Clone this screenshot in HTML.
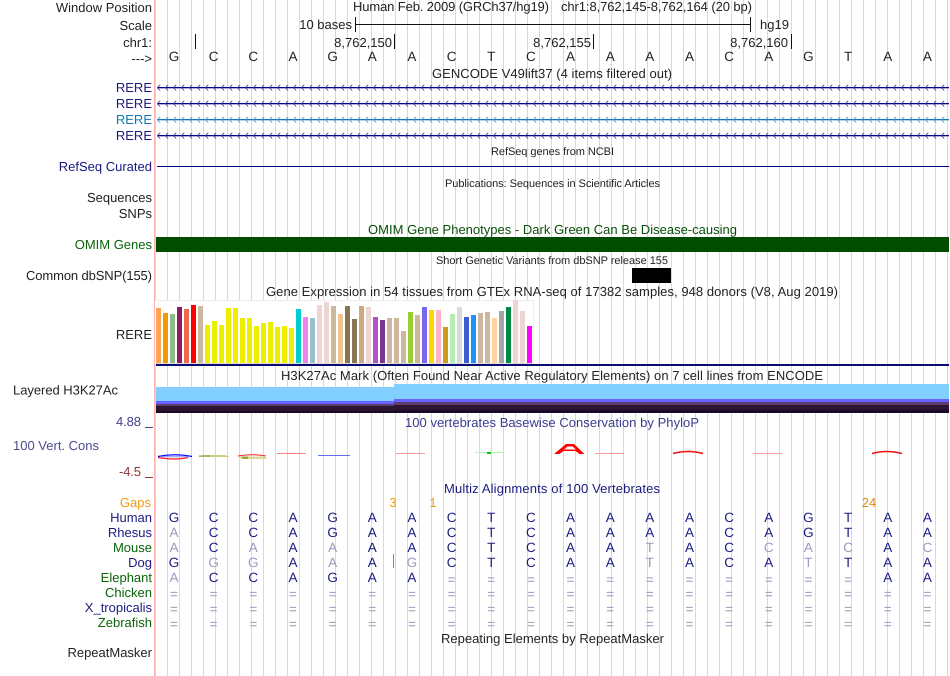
<!DOCTYPE html>
<html><head><meta charset="utf-8"><title>UCSC Genome Browser</title>
<style>
html,body{margin:0;padding:0;background:#fff;width:950px;height:676px;overflow:hidden}
#g{position:absolute;left:155px;top:0;width:795px;height:676px;background:repeating-linear-gradient(to right,#d8d4f6 0 1px,transparent 1px 12px)}
#p{position:absolute;left:154px;top:0;width:1px;height:676px;background:#ffb0b0}
svg{position:absolute;left:0;top:0}
text{font-family:"Liberation Sans",sans-serif;font-size:13px;fill:#222;text-rendering:geometricPrecision}
.e{text-anchor:end}.m{text-anchor:middle}
.n{fill:#1a1a80}.gr{fill:#0a640a}
.b{text-anchor:middle;fill:#1a1a80;font-size:13.5px}
.b tspan{fill:#9a9ac0}
.s{font-size:11px}
</style></head><body>
<div id="g"></div><div id="p"></div>
<svg width="950" height="676" viewBox="0 0 950 676">
<defs>
<pattern id="c1" x="157" y="80" width="8" height="16" patternUnits="userSpaceOnUse"><path d="M3.2 4.8L0.3 7.7L3.2 10.6" fill="none" stroke="#3a3a9a" stroke-width="0.8"/></pattern>
<pattern id="c2" x="157" y="112" width="8" height="16" patternUnits="userSpaceOnUse"><path d="M3.2 4.8L0.3 7.7L3.2 10.6" fill="none" stroke="#4a9ac8" stroke-width="0.8"/></pattern>
</defs>
<!-- left labels -->
<text class="e" x="152" y="12">Window Position</text>
<text class="e" x="152" y="30">Scale</text>
<text class="e" x="152" y="47">chr1:</text>
<text class="e" x="152" y="63">---&gt;</text>
<text class="e n" x="152" y="92">RERE</text>
<text class="e n" x="152" y="108">RERE</text>
<text class="e" style="fill:#0f78b4" x="152" y="124">RERE</text>
<text class="e n" x="152" y="140">RERE</text>
<text class="e n" x="152" y="171">RefSeq Curated</text>
<text class="e" x="152" y="202">Sequences</text>
<text class="e" x="152" y="218">SNPs</text>
<text class="e gr" x="152" y="249">OMIM Genes</text>
<text class="e" x="152" y="280" textLength="126">Common dbSNP(155)</text>
<text class="e" x="152" y="339">RERE</text>
<text x="13" y="394.5" textLength="105">Layered H3K27Ac</text>
<text x="13" y="450" style="fill:#4c4c96" textLength="86">100 Vert. Cons</text>
<text x="116" y="426" style="fill:#44448f" textLength="25">4.88</text>
<rect x="145" y="427" width="8" height="1" fill="#44448f"/>
<text x="119" y="476" style="fill:#8b3a3a" textLength="22">-4.5</text>
<rect x="145" y="477" width="8" height="1" fill="#8b3a3a"/>
<text class="e" style="fill:#f39c12" x="151" y="507">Gaps</text>
<text class="e n" x="152" y="522">Human</text>
<text class="e n" x="152" y="537">Rhesus</text>
<text class="e gr" x="152" y="552">Mouse</text>
<text class="e n" x="152" y="567">Dog</text>
<text class="e gr" x="152" y="582">Elephant</text>
<text class="e gr" x="152" y="597">Chicken</text>
<text class="e n" x="152" y="612">X_tropicalis</text>
<text class="e gr" x="152" y="627">Zebrafish</text>
<text class="e" x="152" y="657">RepeatMasker</text>
<!-- ruler -->
<text x="353" y="11" textLength="196">Human Feb. 2009 (GRCh37/hg19)</text>
<text x="561" y="11" textLength="191">chr1:8,762,145-8,762,164 (20 bp)</text>
<text class="e" x="352" y="29">10 bases</text>
<rect x="355" y="17" width="1" height="15" fill="#111"/>
<rect x="355" y="24" width="396" height="1" fill="#111"/>
<rect x="750" y="17" width="1" height="15" fill="#111"/>
<text x="760" y="29">hg19</text>
<rect x="195" y="34" width="1" height="15" fill="#111"/>
<rect x="394" y="34" width="1" height="15" fill="#111"/>
<rect x="593" y="34" width="1" height="15" fill="#111"/>
<rect x="791" y="34" width="1" height="15" fill="#111"/>
<text class="e" x="392" y="47">8,762,150</text>
<text class="e" x="591" y="47">8,762,155</text>
<text class="e" x="788" y="47">8,762,160</text>
<text class="b" style="fill:#222" y="61" x="174 213.6 253.3 293 332.6 372.3 411.9 451.6 491.2 530.9 570.5 610.2 649.8 689.5 729.1 768.8 808.4 848.1 887.7 927.4">GCCAGAACTCAAAACAGTAA</text>
<!-- gencode -->
<text x="432" y="78" textLength="240">GENCODE V49lift37 (4 items filtered out)</text>
<rect x="157" y="87" width="792" height="1.3" fill="#000080"/>
<rect x="157" y="103" width="792" height="1.3" fill="#000080"/>
<rect x="157" y="119" width="792" height="1.3" fill="#0f78b4"/>
<rect x="157" y="135" width="792" height="1.3" fill="#000080"/>
<rect x="157" y="80" width="792" height="16" fill="url(#c1)"/>
<rect x="157" y="96" width="792" height="16" fill="url(#c1)"/>
<rect x="157" y="112" width="792" height="16" fill="url(#c2)"/>
<rect x="157" y="128" width="792" height="16" fill="url(#c1)"/>
<text class="s" x="491" y="155" textLength="123">RefSeq genes from NCBI</text>
<rect x="157" y="166" width="792" height="1" fill="#000080"/>
<text class="s" x="445" y="187" textLength="215">Publications: Sequences in Scientific Articles</text>
<text x="368" y="234" textLength="369" style="fill:#0a500a">OMIM Gene Phenotypes - Dark Green Can Be Disease-causing</text>
<rect x="156" y="237" width="793" height="15" fill="#004d00"/>
<text class="s" x="436" y="264" textLength="232">Short Genetic Variants from dbSNP release 155</text>
<rect x="632" y="268" width="39" height="15" fill="#000"/>
<text x="266" y="296" textLength="572">Gene Expression in 54 tissues from GTEx RNA-seq of 17382 samples, 948 donors (V8, Aug 2019)</text>
<!-- chart -->
<rect x="155" y="300" width="379" height="64" fill="#fff"/>
<rect x="156" y="300" width="377" height="1" fill="#eee"/>
<rect x="533" y="300" width="1" height="64" fill="#eee"/>
<rect x="156" y="363" width="378" height="1" fill="#ddd"/>
<g>
<rect x="156" y="308" width="5" height="55" fill="#ffa54f"/>
<rect x="163" y="313" width="5" height="50" fill="#ee9a00"/>
<rect x="170" y="314" width="5" height="49" fill="#8fbc8f"/>
<rect x="177" y="307" width="5" height="56" fill="#8b1c62"/>
<rect x="184" y="309" width="5" height="54" fill="#ee6a50"/>
<rect x="191" y="305" width="5" height="58" fill="#ff0000"/>
<rect x="198" y="306" width="5" height="57" fill="#cdb79e"/>
<rect x="205" y="325" width="5" height="38" fill="#eeee00"/>
<rect x="212" y="321" width="5" height="42" fill="#eeee00"/>
<rect x="219" y="325" width="5" height="38" fill="#eeee00"/>
<rect x="226" y="308" width="5" height="55" fill="#eeee00"/>
<rect x="233" y="308" width="5" height="55" fill="#eeee00"/>
<rect x="240" y="318" width="5" height="45" fill="#eeee00"/>
<rect x="247" y="318" width="5" height="45" fill="#eeee00"/>
<rect x="254" y="326" width="5" height="37" fill="#eeee00"/>
<rect x="261" y="323" width="5" height="40" fill="#eeee00"/>
<rect x="268" y="322" width="5" height="41" fill="#eeee00"/>
<rect x="275" y="327" width="5" height="36" fill="#eeee00"/>
<rect x="282" y="326" width="5" height="37" fill="#eeee00"/>
<rect x="289" y="328" width="5" height="35" fill="#eeee00"/>
<rect x="296" y="309" width="5" height="54" fill="#00cdcd"/>
<rect x="303" y="317" width="5" height="46" fill="#ee82ee"/>
<rect x="310" y="318" width="5" height="45" fill="#9ac0cd"/>
<rect x="317" y="305" width="5" height="58" fill="#eed5d2"/>
<rect x="324" y="302" width="5" height="61" fill="#eed5d2"/>
<rect x="331" y="306" width="5" height="57" fill="#cdb79e"/>
<rect x="338" y="314" width="5" height="49" fill="#eec591"/>
<rect x="345" y="306" width="5" height="57" fill="#8b7355"/>
<rect x="352" y="319" width="5" height="44" fill="#8b7355"/>
<rect x="359" y="306" width="5" height="57" fill="#cdaa7d"/>
<rect x="366" y="307" width="5" height="56" fill="#eed5d2"/>
<rect x="373" y="317" width="5" height="46" fill="#b452cd"/>
<rect x="380" y="320" width="5" height="43" fill="#7a378b"/>
<rect x="387" y="318" width="5" height="45" fill="#cdb79e"/>
<rect x="394" y="318" width="5" height="45" fill="#cdb79e"/>
<rect x="401" y="331" width="5" height="32" fill="#cdb79e"/>
<rect x="408" y="312" width="5" height="51" fill="#9acd32"/>
<rect x="415" y="315" width="5" height="48" fill="#cdb79e"/>
<rect x="422" y="307" width="5" height="56" fill="#7a67ee"/>
<rect x="429" y="310" width="5" height="53" fill="#ffd700"/>
<rect x="436" y="310" width="5" height="53" fill="#ffb5c5"/>
<rect x="443" y="327" width="5" height="36" fill="#cd9b1d"/>
<rect x="450" y="314" width="5" height="49" fill="#b4eeb4"/>
<rect x="457" y="307" width="5" height="56" fill="#d9d9d9"/>
<rect x="464" y="317" width="5" height="46" fill="#3a5fcd"/>
<rect x="471" y="315" width="5" height="48" fill="#1e90ff"/>
<rect x="478" y="313" width="5" height="50" fill="#cdb79e"/>
<rect x="485" y="312" width="5" height="51" fill="#cdb79e"/>
<rect x="492" y="318" width="5" height="45" fill="#ffd39b"/>
<rect x="499" y="311" width="5" height="52" fill="#a6a6a6"/>
<rect x="506" y="307" width="5" height="56" fill="#008b45"/>
<rect x="513" y="300" width="5" height="63" fill="#eed5d2"/>
<rect x="520" y="311" width="5" height="52" fill="#eed5d2"/>
<rect x="527" y="326" width="5" height="37" fill="#ff00ff"/>
</g>
<rect x="156" y="364" width="793" height="2" fill="#0a0a70"/>
<text x="281" y="380" textLength="542">H3K27Ac Mark (Often Found Near Active Regulatory Elements) on 7 cell lines from ENCODE</text>
<!-- H3K27Ac -->
<rect x="156" y="387" width="238" height="14" fill="#80cfff"/>
<rect x="156" y="401" width="238" height="3" fill="#6a5fff"/>
<rect x="156" y="404" width="238" height="2" fill="#5a3c6e"/>
<rect x="156" y="406" width="238" height="5" fill="#2d1530"/>
<rect x="156" y="411" width="238" height="2" fill="#1a0a2a"/>
<rect x="394" y="384" width="555" height="15" fill="#80cfff"/>
<rect x="394" y="399" width="555" height="3" fill="#6a5fff"/>
<rect x="394" y="402" width="555" height="3" fill="#5a3c6e"/>
<rect x="394" y="405" width="555" height="5" fill="#2d1530"/>
<rect x="394" y="410" width="555" height="3" fill="#1a0a2a"/>
<!-- phyloP -->
<text x="405" y="427" textLength="294" style="fill:#3c3c90">100 vertebrates Basewise Conservation by PhyloP</text>
<path d="M158 456.5Q175 453 192 456.5" fill="none" stroke="#0000ff" stroke-width="1.2"/>
<path d="M158 457.5Q175 460.5 188 457.5" fill="none" stroke="#ff2020" stroke-width="1.2"/>
<path d="M160 456.8H190" stroke="#9090ff" stroke-width="1"/>
<path d="M199 456.5L203 455H225L229 456.5V457H199Z" fill="#cfcf80"/>
<path d="M199 456H210" stroke="#80a040" stroke-width="1"/>
<path d="M238 456Q252 453.5 266 456" fill="none" stroke="#ff2020" stroke-width="1"/>
<path d="M238 456.5H264L268 459H242Z" fill="#dada98"/>
<path d="M241 456.5H248V459H243Z" fill="#a0a030"/>
<path d="M277 453.5H306" stroke="#ff8080" stroke-width="1"/>
<path d="M318 455.5H350" stroke="#6a6af0" stroke-width="1"/>
<path d="M396 453.5H425" stroke="#ff9a9a" stroke-width="1"/>
<path d="M475 452.5H503" stroke="#b4f5b4" stroke-width="1"/>
<rect x="487" y="452" width="4" height="2" fill="#00d000"/>
<path fill-rule="evenodd" fill="#ff0000" d="M554 454L566 444H574L584.5 454H579.5L575.5 451H563.5L559.5 454ZM564 449.5H576L572.5 446.5H567.5Z"/>
<path d="M595 453.5H624" stroke="#ff9a9a" stroke-width="1"/>
<path d="M673 453.5Q688 449.5 703 453.5" fill="none" stroke="#f01010" stroke-width="1.5"/>
<path d="M753 453.5H782" stroke="#ff9a9a" stroke-width="1"/>
<path d="M872 453.5Q887 449.5 902 453.5" fill="none" stroke="#f01010" stroke-width="1.5"/>
<!-- multiz -->
<text x="444" y="493" textLength="216" class="n">Multiz Alignments of 100 Vertebrates</text>
<text class="m" style="fill:#f39c12" x="393" y="507">3</text>
<text class="m" style="fill:#f39c12" x="433" y="507">1</text>
<text class="m" style="fill:#e8890c" x="869" y="507">24</text>
<rect x="393" y="554" width="1" height="14" fill="#c88020"/>
<text class="b" y="522" x="174 213.6 253.3 293 332.6 372.3 411.9 451.6 491.2 530.9 570.5 610.2 649.8 689.5 729.1 768.8 808.4 848.1 887.7 927.4">GCCAGAACTCAAAACAGTAA</text>
<text class="b" y="537" x="174 213.6 253.3 293 332.6 372.3 411.9 451.6 491.2 530.9 570.5 610.2 649.8 689.5 729.1 768.8 808.4 848.1 887.7 927.4"><tspan>A</tspan>CCAGAACTCAAAACAGTAA</text>
<text class="b" y="552" x="174 213.6 253.3 293 332.6 372.3 411.9 451.6 491.2 530.9 570.5 610.2 649.8 689.5 729.1 768.8 808.4 848.1 887.7 927.4"><tspan>A</tspan>C<tspan>A</tspan>A<tspan>A</tspan>AACTCAA<tspan>T</tspan>AC<tspan>CAC</tspan>A<tspan>C</tspan></text>
<text class="b" y="567" x="174 213.6 253.3 293 332.6 372.3 411.9 451.6 491.2 530.9 570.5 610.2 649.8 689.5 729.1 768.8 808.4 848.1 887.7 927.4">G<tspan>GG</tspan>A<tspan>A</tspan>A<tspan>G</tspan>CTCAA<tspan>T</tspan>ACA<tspan>T</tspan>TAA</text>
<text class="b" y="582" x="174 213.6 253.3 293 332.6 372.3 411.9 887.7 927.4"><tspan>A</tspan>CCAGAAAA</text>
<text class="b" y="584" x="451.6 491.2 530.9 570.5 610.2 649.8 689.5 729.1 768.8 808.4 848.1"><tspan>===========</tspan></text>
<text class="b" y="598.5" x="174 213.6 253.3 293 332.6 372.3 411.9 451.6 491.2 530.9 570.5 610.2 649.8 689.5 729.1 768.8 808.4 848.1 887.7 927.4"><tspan>====================</tspan></text>
<text class="b" y="613.5" x="174 213.6 253.3 293 332.6 372.3 411.9 451.6 491.2 530.9 570.5 610.2 649.8 689.5 729.1 768.8 808.4 848.1 887.7 927.4"><tspan>====================</tspan></text>
<text class="b" y="628.5" x="174 213.6 253.3 293 332.6 372.3 411.9 451.6 491.2 530.9 570.5 610.2 649.8 689.5 729.1 768.8 808.4 848.1 887.7 927.4"><tspan>====================</tspan></text>
<text x="441" y="643" textLength="223">Repeating Elements by RepeatMasker</text>
</svg>
</body></html>
